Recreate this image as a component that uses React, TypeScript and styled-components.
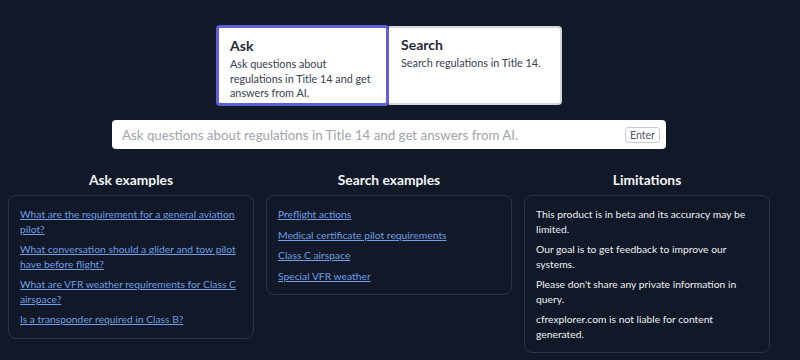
import React from "react";
import styled, { createGlobalStyle } from "styled-components";

const Global = createGlobalStyle`
  html, body { margin: 0; padding: 0; background: #111827; }
  body { font-family: Lato, "Noto Sans", sans-serif; }
`;

const Page = styled.div`
  width: 762px;
  margin-left: 8px;
  padding-top: 25px;
  display: flex;
  flex-direction: column;
  align-items: center;
`;

const Tabs = styled.div`
  display: flex;
  width: 346px;
`;

const Tab = styled.div<{ $active?: boolean }>`
  box-sizing: border-box;
  width: 173px;
  height: ${(p) => (p.$active ? 81 : 79)}px;
  margin-top: ${(p) => (p.$active ? 0 : 1)}px;
  background: #ffffff;
  border: ${(p) => (p.$active ? "3px solid #5f5fd8" : "2px solid #d4d6dc")};
  border-radius: 4px;
  padding: ${(p) => (p.$active ? "8px 14px 0 11px" : "7px 14px 0 11px")};
  ${(p) => (!p.$active ? "border-left: none; border-top-left-radius: 0; border-bottom-left-radius: 0; padding-left: 12px;" : "")}
`;

const TabTitle = styled.div`
  font-size: 14px;
  font-weight: 700;
  color: #1f2937;
  line-height: 20px;
`;

const TabDesc = styled.div`
  font-size: 10.8px;
  color: #374151;
  line-height: 14.5px;
  margin-top: 1px;
`;

const InputBar = styled.div`
  box-sizing: border-box;
  margin-top: 14px;
  width: 554px;
  height: 29px;
  background: #fff;
  border-radius: 4px;
  display: flex;
  align-items: center;
  padding: 0 6px 0 10px;
`;

const Placeholder = styled.div`
  flex: 1;
  font-size: 13.3px;
  color: #a0a4ab;
  white-space: nowrap;
`;

const Kbd = styled.div`
  box-sizing: border-box;
  width: 35px;
  height: 16px;
  border: 1px solid #c9ccd1;
  border-radius: 3px;
  font-size: 10.5px;
  color: #4b5563;
  display: flex;
  align-items: center;
  justify-content: center;
`;

const Columns = styled.div`
  margin-top: 21px;
  width: 100%;
  display: grid;
  grid-template-columns: repeat(3, 1fr);
  column-gap: 12px;
  align-items: start;
`;

const Column = styled.div`
  display: flex;
  flex-direction: column;
`;

const Heading = styled.div`
  text-align: center;
  font-size: 13.8px;
  font-weight: 700;
  color: #f3f4f6;
  line-height: 20px;
  height: 25px;
`;

const Box = styled.div`
  box-sizing: border-box;
  border: 1px solid #2c3444;
  border-radius: 8px;
  padding: 11px 11px 11px 11px;
  display: flex;
  flex-direction: column;
  gap: 6px;
`;

const LinkItem = styled.a`
  font-size: 10.3px;
  line-height: 14.5px;
  color: #6f9fe6;
  text-decoration: underline;
  cursor: pointer;
`;

const TextItem = styled.div`
  font-size: 10.3px;
  line-height: 14.5px;
  color: #eef0f3;
`;

const ask = [
  "What are the requirement for a general aviation pilot?",
  "What conversation should a glider and tow pilot have before flight?",
  "What are VFR weather requirements for Class C airspace?",
  "Is a transponder required in Class B?",
];
const search = [
  "Preflight actions",
  "Medical certificate pilot requirements",
  "Class C airspace",
  "Special VFR weather",
];
const limits = [
  "This product is in beta and its accuracy may be limited.",
  "Our goal is to get feedback to improve our systems.",
  "Please don't share any private information in query.",
  "cfrexplorer.com is not liable for content generated.",
];

export default function App() {
  return (
    <>
      <Global />
      <Page>
        <Tabs>
          <Tab $active>
            <TabTitle>Ask</TabTitle>
            <TabDesc>Ask questions about regulations in Title 14 and get answers from AI.</TabDesc>
          </Tab>
          <Tab>
            <TabTitle>Search</TabTitle>
            <TabDesc>Search regulations in Title 14.</TabDesc>
          </Tab>
        </Tabs>
        <InputBar>
          <Placeholder>Ask questions about regulations in Title 14 and get answers from AI.</Placeholder>
          <Kbd>Enter</Kbd>
        </InputBar>
        <Columns>
          <Column>
            <Heading>Ask examples</Heading>
            <Box>
              {ask.map((t) => (
                <LinkItem key={t}>{t}</LinkItem>
              ))}
            </Box>
          </Column>
          <Column>
            <Heading>Search examples</Heading>
            <Box>
              {search.map((t) => (
                <LinkItem key={t}>{t}</LinkItem>
              ))}
            </Box>
          </Column>
          <Column>
            <Heading>Limitations</Heading>
            <Box>
              {limits.map((t) => (
                <TextItem key={t}>{t}</TextItem>
              ))}
            </Box>
          </Column>
        </Columns>
      </Page>
    </>
  );
}
